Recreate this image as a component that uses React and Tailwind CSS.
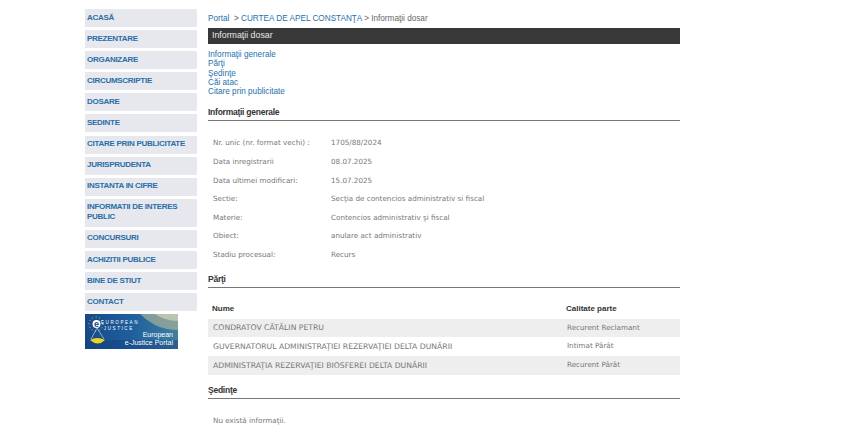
import React from 'react';

const menu = [
  'ACASĂ', 'PREZENTARE', 'ORGANIZARE', 'CIRCUMSCRIPTIE', 'DOSARE', 'SEDINTE',
  'CITARE PRIN PUBLICITATE', 'JURISPRUDENTA', 'INSTANTA IN CIFRE',
  'INFORMATII DE INTERES PUBLIC', 'CONCURSURI', 'ACHIZITII PUBLICE', 'BINE DE STIUT', 'CONTACT',
];

const info = [
  ['Nr. unic (nr. format vechi) :', '1705/88/2024'],
  ['Data inregistrarii', '08.07.2025'],
  ['Data ultimei modificari:', '15.07.2025'],
  ['Sectie:', 'Secţia de contencios administrativ si fiscal'],
  ['Materie:', 'Contencios administrativ şi fiscal'],
  ['Obiect:', 'anulare act administrativ'],
  ['Stadiu procesual:', 'Recurs'],
];

const parti = [
  ['CONDRATOV CĂTĂLIN PETRU', 'Recurent Reclamant'],
  ['GUVERNATORUL ADMINISTRAŢIEI REZERVAŢIEI DELTA DUNĂRII', 'Intimat Pârât'],
  ['ADMINISTRAŢIA REZERVAŢIEI BIOSFEREI DELTA DUNĂRII', 'Recurent Pârât'],
];

const links = ['Informaţii generale', 'Părţi', 'Şedinţe', 'Căi atac', 'Citare prin publicitate'];

const Heading = ({ children, className = '' }) => (
  <div className={`h-[18px] pt-[3px] border-b border-[#777] text-[8.5px] tracking-[-0.25px] leading-[13px] font-bold text-[#333] ${className}`}>
    {children}
  </div>
);

const App = () => (
  <div className="w-[855px] h-[444px] overflow-hidden bg-white flex pl-[85px] pt-[9px] font-['Liberation_Sans',sans-serif]">
    <aside className="w-[112px] shrink-0 flex flex-col gap-[3.1px]">
      {menu.map((m) => (
        <div key={m} className="bg-[#e6e8ee] min-h-[18px] px-[2px] pt-[3.5px] pb-[4.5px] text-[8px] tracking-[-0.28px] leading-[10px] font-bold text-[#2a6ea6]">
          {m}
        </div>
      ))}
      <div className="w-[93px] h-[35px] relative overflow-hidden bg-gradient-to-r from-[#17498a] via-[#1f5f9c] to-[#3f7f9f]">
        <svg viewBox="0 0 93 35" className="absolute inset-0 w-full h-full">
          <path d="M55 0 L93 0 L93 16 Q80 16 70 11 Q62 7 55 0Z" fill="#a9b09a" opacity="0.7" />
          <path d="M70 0 L93 0 L93 7 Q80 7 70 0Z" fill="#e6e2c4" opacity="0.55" />
          <rect x="0" y="26" width="93" height="9" fill="#123f7c" opacity="0.45" />
          <circle cx="11" cy="10" r="7" fill="none" stroke="#f2d64b" strokeWidth="1" strokeDasharray="1 2.6" />
          <circle cx="11.5" cy="10" r="4" fill="#fff" />
          <path d="M5 26 Q12 22 20 26 Q13 33 5 26Z" fill="#f2d21f" />
          <path d="M12 14 L6 25 M12 14 L19 25" stroke="#dfe6ee" strokeWidth="0.6" />
        </svg>
        <span className="absolute left-[9px] top-[3.5px] text-[9px] leading-[12px] font-bold text-[#17498a]">e</span>
        <span className="absolute left-[16px] top-[6px] text-[4.5px] leading-[5.5px] tracking-[1.6px] text-white">EUROPEAN<br />&nbsp;JUSTICE</span>
        <span className="absolute right-[5px] top-[17px] text-right text-[7px] leading-[8px] text-white">European<br />e-Justice Portal</span>
      </div>
    </aside>

    <main className="w-[472px] ml-[11px]">
      <div className="h-[19px] pt-[4px] text-[8.2px] leading-[11px] text-[#1f70ab]">
        Portal <span className="text-[#555]">&nbsp;&gt;</span> CURTEA DE APEL CONSTANŢA <span className="text-[#666]">&gt; Informaţii dosar</span>
      </div>
      <div className="h-[16px] bg-[#393939] pl-[4px] text-[8.8px] leading-[15px] text-[#e8e8e8]">Informaţii dosar</div>
      <div className="mt-[6px] flex flex-col text-[8.2px] leading-[9.3px] text-[#1f70ab]">
        {links.map((l) => <span key={l}>{l}</span>)}
      </div>
      <Heading className="mt-[7px]">Informaţii generale</Heading>

      <div className="mt-[13px] pl-[5px] flex flex-col font-['DejaVu_Sans',sans-serif] text-[7.2px] text-[#777]">
        {info.map(([k, v]) => (
          <div key={k} className="h-[18.6px] flex items-center">
            <span className="w-[118px]">{k}</span>
            <span>{v}</span>
          </div>
        ))}
      </div>

      <Heading className="mt-[5px]">Părţi</Heading>
      <div className="mt-[14px] flex h-[14px] items-center pl-[4px] text-[8px] font-bold text-[#333]">
        <span className="w-[354px]">Nume</span>
        <span>Calitate parte</span>
      </div>
      <div className="mt-[3px] flex flex-col font-['DejaVu_Sans',sans-serif] text-[#777]">
        {parti.map(([n, c], i) => (
          <div key={n} className={`h-[18.7px] flex items-center pl-[5px] ${i % 2 === 0 ? 'bg-[#eeeeee]' : ''}`}>
            <span className="w-[354px] text-[7.7px]">{n}</span>
            <span className="text-[7.2px]">{c}</span>
          </div>
        ))}
      </div>
      <Heading className="mt-[6px]">Şedinţe</Heading>
      <div className="mt-[17px] pl-[5px] font-['DejaVu_Sans',sans-serif] text-[7.2px] text-[#777]">Nu există informaţii.</div>
    </main>
  </div>
);

export default App;
